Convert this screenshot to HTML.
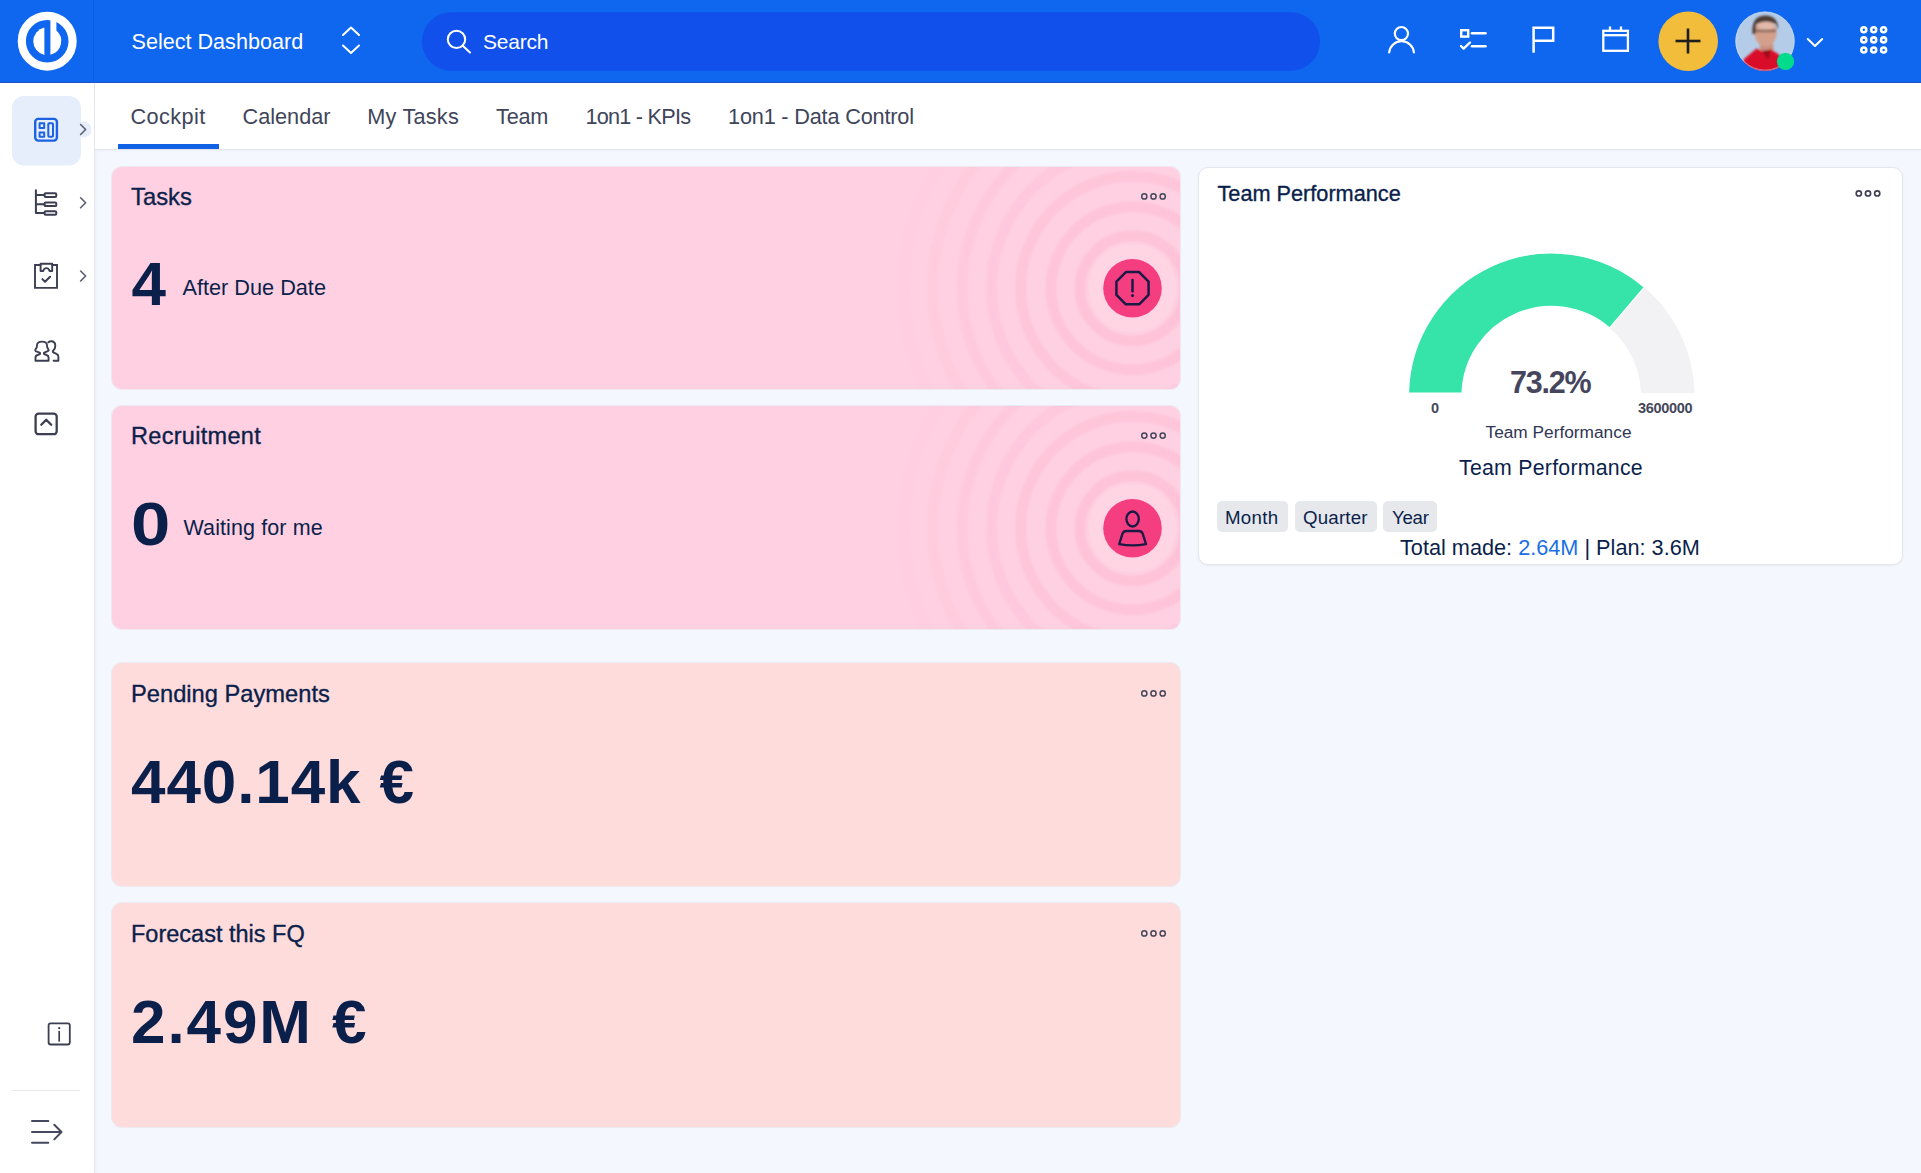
<!DOCTYPE html>
<html><head><meta charset="utf-8">
<style>
*{margin:0;padding:0;box-sizing:border-box}
html,body{width:1921px;height:1173px;overflow:hidden;background:#f4f7fd;font-family:"Liberation Sans",sans-serif}
.abs{position:absolute}
.t{position:absolute;white-space:nowrap;line-height:1}
#hdr{position:absolute;left:0;top:0;width:1921px;height:82px;z-index:2;background:#0f66ef;box-shadow:0 1px 0 #2353c2}
#side{position:absolute;left:0;top:83px;width:95px;height:1090px;background:#fff;border-right:1px solid #e6e8ed;box-shadow:1px 0 3px rgba(30,40,70,.04)}
#tabs{position:absolute;left:95px;top:83px;width:1826px;height:67px;background:#fff;border-bottom:1px solid #e2e5ea;box-shadow:0 1px 2px rgba(0,0,0,.03)}
.card{position:absolute;border-radius:10px;overflow:hidden}
.pink{background:#ffd0e1;box-shadow:0 0 0 1px rgba(190,110,140,.10)}
.salmon{background:#ffdcdc;box-shadow:0 0 0 1px rgba(190,120,120,.10)}
.navy{color:#0b1f4b}
</style></head><body>

<div id="hdr">
  <svg class="abs" style="left:0;top:0" width="1921" height="83">
    <!-- logo -->
    <g transform="translate(47.2,41.2)" fill="#fff">
      <circle r="25.4" fill="none" stroke="#fff" stroke-width="8.2"/>
      <path d="M-2.8,-13.7 A14 14 0 0 0 -2.8,13.7 Z"/>
      <path d="M3.2,-22 L9.2,-22 L9.2,-10.6 A14 14 0 0 1 3.2,13.63 Z"/>
    </g>
    <line x1="93.5" y1="0" x2="93.5" y2="83" stroke="#0d5de4" stroke-width="1"/>
    <!-- up/down chevrons -->
    <path d="M343,35 L351,27.5 L359,35 M343,45.5 L351,53 L359,45.5" fill="none" stroke="#fff" stroke-width="2" stroke-linecap="round" stroke-linejoin="round"/>
    <!-- search pill -->
    <rect x="422" y="12.3" width="898" height="58.5" rx="29.2" fill="#1150ea"/>
    <circle cx="456.5" cy="39.4" r="8.7" fill="none" stroke="#fff" stroke-width="2"/>
    <line x1="463" y1="46" x2="470" y2="52.5" stroke="#fff" stroke-width="2" stroke-linecap="round"/>
    <!-- user -->
    <circle cx="1401.4" cy="33.6" r="6.6" fill="none" stroke="#fff" stroke-width="2.2"/>
    <path d="M1389.2,52.5 A12.4 12.4 0 0 1 1413.9,52.5" fill="none" stroke="#fff" stroke-width="2.2" stroke-linecap="round"/>
    <!-- tasks -->
    <rect x="1461.2" y="30.2" width="7" height="6.4" fill="none" stroke="#fff" stroke-width="2.4"/>
    <line x1="1472" y1="33.3" x2="1485.5" y2="33.3" stroke="#fff" stroke-width="2.6" stroke-linecap="round"/>
    <line x1="1472" y1="46.2" x2="1485.5" y2="46.2" stroke="#fff" stroke-width="2.6" stroke-linecap="round"/>
    <path d="M1461,46 L1463.6,48.6 L1470,42.5" fill="none" stroke="#fff" stroke-width="2.4" stroke-linecap="round" stroke-linejoin="round"/>
    <!-- flag -->
    <path d="M1533.6,52.8 L1533.6,27.8 L1553.2,27.8 L1553.2,40.7 L1533.6,40.7" fill="none" stroke="#fff" stroke-width="2.5"/>
    <!-- calendar -->
    <rect x="1603.3" y="30.8" width="24.6" height="20" fill="none" stroke="#fff" stroke-width="2.3"/>
    <line x1="1603.3" y1="35.2" x2="1627.9" y2="35.2" stroke="#fff" stroke-width="2.3"/>
    <line x1="1610" y1="26.5" x2="1610" y2="30.8" stroke="#fff" stroke-width="2.3"/>
    <line x1="1621" y1="26.5" x2="1621" y2="30.8" stroke="#fff" stroke-width="2.3"/>
    <!-- plus -->
    <circle cx="1688.2" cy="41.2" r="29.8" fill="#f2bd3b"/>
    <line x1="1675.5" y1="41" x2="1700.5" y2="41" stroke="#1f1d1a" stroke-width="2.6"/>
    <line x1="1688" y1="28.5" x2="1688" y2="53.5" stroke="#1f1d1a" stroke-width="2.6"/>
    <!-- avatar -->
    <defs><clipPath id="av"><circle cx="1765" cy="41.3" r="29.6"/></clipPath>
      <filter id="blur" x="-20%" y="-20%" width="140%" height="140%"><feGaussianBlur stdDeviation="0.9"/></filter></defs>
    <g clip-path="url(#av)">
      <rect x="1735" y="11" width="60" height="61" fill="#b4cce8"/>
      <g filter="url(#blur)">
        <path d="M1760,44 L1773,44 L1774,53 L1759,53 Z" fill="#c99280"/>
        <path d="M1740,75 L1744,59 L1756.5,48.5 L1762,51 L1771,49.5 L1779,54.5 L1790,75 Z" fill="#d9102a"/>
        <path d="M1762,51 L1768,60 L1771,49.5 Z" fill="#9a0c1c"/>
        <ellipse cx="1765.6" cy="33" rx="11" ry="13.5" fill="#d49f8a"/>
        <ellipse cx="1766" cy="26" rx="8" ry="5" fill="#e2b9a9"/>
        <path d="M1752.5,34 Q1751,16 1765,15.5 Q1779,16 1778,30 L1776,24 Q1766,19 1756,24 L1755.5,34 Z" fill="#4e3c34"/>
        <rect x="1756" y="29.6" width="20" height="2.6" fill="#7a5a50" opacity=".8"/>
      </g>
    </g>
    <circle cx="1765" cy="41" r="29.2" fill="none" stroke="#cfe0f5" stroke-width="0.8" opacity=".7"/>
    <circle cx="1785.5" cy="61.4" r="8.6" fill="#00dc8c"/>
    <!-- chevron down -->
    <path d="M1807.8,39 L1815,46 L1822.2,39" fill="none" stroke="#fff" stroke-width="2" stroke-linecap="round" stroke-linejoin="round"/>
    <!-- grid -->
    <g fill="none" stroke="#fff" stroke-width="2.6">
      <circle cx="1863.8" cy="29.8" r="2.5"/><circle cx="1873.7" cy="29.8" r="2.5"/><circle cx="1883.6" cy="29.8" r="2.5"/>
      <circle cx="1863.8" cy="39.9" r="2.5"/><circle cx="1873.7" cy="39.9" r="2.5"/><circle cx="1883.6" cy="39.9" r="2.5"/>
      <circle cx="1863.8" cy="50" r="2.5"/><circle cx="1873.7" cy="50" r="2.5"/><circle cx="1883.6" cy="50" r="2.5"/>
    </g>
  </svg>
  <div class="t" style="left:131.5px;top:30.5px;font-size:21.6px;color:#fff">Select Dashboard</div>
  <div class="t" style="left:483px;top:30.5px;font-size:21px;color:#fff;letter-spacing:-0.2px">Search</div>
</div>

<div id="side"></div>
<svg class="abs" style="left:0;top:0" width="95" height="1173">
  <rect x="12" y="96" width="69" height="69.5" rx="12" fill="#e7eefb"/>
  <circle cx="83.5" cy="129.5" r="8" fill="#e7eefb"/>
  <g fill="none" stroke="#1d62e2" stroke-width="2.4" stroke-linejoin="round">
    <rect x="35.2" y="118.9" width="21.7" height="21.7" rx="3"/>
    <rect x="39.6" y="123.3" width="4.6" height="4.6" stroke-width="2"/>
    <rect x="39.6" y="132.6" width="4.6" height="4.1" stroke-width="2"/>
    <rect x="48.3" y="123.3" width="4.7" height="13.4" rx="1" stroke-width="2"/>
  </g>
  <g fill="none" stroke="#5b5e70" stroke-width="1.6" stroke-linecap="round" stroke-linejoin="round">
    <path d="M80.6,124.5 L85.6,129.5 L80.6,134.5"/>
    <path d="M80.6,197.8 L85.6,202.8 L80.6,207.8"/>
    <path d="M80.6,271 L85.6,276 L80.6,281"/>
  </g>
  <g fill="none" stroke="#3c3e52" stroke-width="2" stroke-linejoin="round" stroke-linecap="round">
    <path d="M35.9,190.2 V213 H44.5 M35.9,195.1 H44.5 M35.9,204.3 H44.5"/>
    <rect x="44.5" y="193.3" width="11.8" height="3.6" rx="1.2"/>
    <rect x="44.5" y="202.5" width="11.8" height="3.6" rx="1.2"/>
    <rect x="44.5" y="211.2" width="11.8" height="3.6" rx="1.2"/>
    <path d="M40.6,265 H35 V287.9 H57 V265 H52.2" stroke-width="1.9" stroke-linejoin="miter"/>
    <path d="M40.6,271 V263.8 H52.2 V271 H49.6 Q48.8,268.1 46.4,268.1 Q44,268.1 43.2,271 Z" stroke-width="1.9"/>
    <path d="M42.4,279.1 L45,281.8 L50.1,276.7" stroke-width="2"/>
    <path d="M35.5,360.8 L35.5,357.6 Q35.5,355.6 37.6,355 L39.8,354.2 Q40.6,353.2 39.6,352.6 L36.2,351.4 Q34.7,350.6 35.6,349.2 Q37,347.4 37,345.4 Q37,341.6 42,341.6 Q47,341.6 47,345.4 Q47,347.4 48.3,349.2 Q49.2,350.6 47.7,351.2 L44.4,352.6 Q43.4,353.2 44.2,354.2 L46.5,355 Q48.6,355.6 48.6,357.6 L48.6,360.8 Z" stroke-width="1.9"/>
    <path d="M48.3,342.3 Q49.5,341.2 51.2,341.2 Q55.3,341.2 55.3,345.8 Q55.3,348.8 53.3,350.5 Q52.1,351.8 53.8,352.6 L56.5,353.8 Q58.4,354.7 58.4,357 L58.4,360.8 L53.6,360.8" stroke-width="1.9"/>
    <rect x="35.6" y="413.6" width="21.1" height="20.6" rx="3" stroke-width="2.3"/>
    <path d="M41.3,424.8 L46.2,419.8 L51.2,424.8" stroke-width="2.3"/>
    <rect x="48.6" y="1023.3" width="21.2" height="21.2" rx="2" stroke-width="1.8"/>
    <path d="M59.2,1031.5 V1041" stroke-width="1.7"/>
  </g>
  <circle cx="59.2" cy="1028.2" r="1.1" fill="#3c3e52"/>
  <line x1="12" y1="1090.5" x2="80" y2="1090.5" stroke="#e6e7ec" stroke-width="1"/>
  <g fill="none" stroke="#45485f" stroke-width="2" stroke-linecap="round" stroke-linejoin="round">
    <path d="M32,1121 H48.3 M32,1132 H61 M32,1142.8 H48.3 M54.3,1124.8 L61.5,1132 L54.3,1139.4"/>
  </g>
</svg>

<div id="tabs"></div>
<div class="abs" style="left:118px;top:144px;width:101px;height:5px;background:#1262e6"></div>
<div class="t" style="left:130.5px;top:105.9px;font-size:21.7px;color:#40455a;letter-spacing:0.42px">Cockpit</div>
<div class="t" style="left:242.5px;top:105.9px;font-size:21.7px;color:#40455a">Calendar</div>
<div class="t" style="left:367.2px;top:105.9px;font-size:21.7px;color:#40455a;letter-spacing:0.23px">My Tasks</div>
<div class="t" style="left:496px;top:105.9px;font-size:21.7px;color:#40455a;letter-spacing:-0.2px">Team</div>
<div class="t" style="left:585.5px;top:105.9px;font-size:21.7px;color:#40455a;letter-spacing:-0.78px">1on1 - KPIs</div>
<div class="t" style="left:728px;top:105.9px;font-size:21.7px;color:#40455a;letter-spacing:-0.18px">1on1 - Data Control</div>


<div class="card pink" style="left:112px;top:167px;width:1068px;height:222px">
  <svg class="abs" style="left:0;top:0" width="1068" height="222">
    <defs><filter id="sf" x="-10%" y="-10%" width="120%" height="120%"><feGaussianBlur stdDeviation="0.9"/></filter></defs>
    <g filter="url(#sf)"><circle cx="1020.5" cy="121.2" r="52.5" fill="none" stroke="#ffbcd3" stroke-width="11" opacity="0.62"/><circle cx="1020.5" cy="121.2" r="81.5" fill="none" stroke="#ffbcd3" stroke-width="11" opacity="0.56"/><circle cx="1020.5" cy="121.2" r="112" fill="none" stroke="#ffbcd3" stroke-width="11" opacity="0.5"/><circle cx="1020.5" cy="121.2" r="141" fill="none" stroke="#ffbcd3" stroke-width="11" opacity="0.42"/><circle cx="1020.5" cy="121.2" r="170.5" fill="none" stroke="#ffbcd3" stroke-width="11" opacity="0.33"/><circle cx="1020.5" cy="121.2" r="200" fill="none" stroke="#ffbcd3" stroke-width="11" opacity="0.22"/><circle cx="1020.5" cy="121.2" r="229" fill="none" stroke="#ffbcd3" stroke-width="11" opacity="0.1"/></g>
    <circle cx="1020.5" cy="121.2" r="44" fill="#fff" opacity=".12"/>
    <circle cx="1020.5" cy="121.2" r="29.3" fill="#f53e7f"/>
    <polygon points="1036.58,127.86 1027.16,137.28 1013.84,137.28 1004.42,127.86 1004.42,114.54 1013.84,105.12 1027.16,105.12 1036.58,114.54" fill="none" stroke="#191a45" stroke-width="2.5" stroke-linejoin="round"/>
    <line x1="1020.5" y1="113" x2="1020.5" y2="124.2" stroke="#191a45" stroke-width="2.5" stroke-linecap="round"/>
    <circle cx="1020.5" cy="128.5" r="1.5" fill="#191a45"/>
    <g fill="none" stroke="#44465a" stroke-width="1.5"><circle cx="1032.3" cy="29.4" r="2.6"/><circle cx="1041.5" cy="29.4" r="2.6"/><circle cx="1050.7" cy="29.4" r="2.6"/></g>
  </svg>
</div>
<div class="card pink" style="left:112px;top:406px;width:1068px;height:222.5px">
  <svg class="abs" style="left:0;top:0" width="1068" height="223">
    <g filter="url(#sf)"><circle cx="1020.5" cy="122.2" r="52.5" fill="none" stroke="#ffbcd3" stroke-width="11" opacity="0.62"/><circle cx="1020.5" cy="122.2" r="81.5" fill="none" stroke="#ffbcd3" stroke-width="11" opacity="0.56"/><circle cx="1020.5" cy="122.2" r="112" fill="none" stroke="#ffbcd3" stroke-width="11" opacity="0.5"/><circle cx="1020.5" cy="122.2" r="141" fill="none" stroke="#ffbcd3" stroke-width="11" opacity="0.42"/><circle cx="1020.5" cy="122.2" r="170.5" fill="none" stroke="#ffbcd3" stroke-width="11" opacity="0.33"/><circle cx="1020.5" cy="122.2" r="200" fill="none" stroke="#ffbcd3" stroke-width="11" opacity="0.22"/><circle cx="1020.5" cy="122.2" r="229" fill="none" stroke="#ffbcd3" stroke-width="11" opacity="0.1"/></g>
    <circle cx="1020.5" cy="122.2" r="44" fill="#fff" opacity=".12"/>
    <circle cx="1020.5" cy="122.2" r="29.3" fill="#f53e7f"/>
    <ellipse cx="1020.6" cy="113" rx="6.2" ry="7.5" fill="none" stroke="#191a45" stroke-width="2.3"/>
    <path d="M1007.2,138.2 L1010.5,127.6 Q1011.5,125 1014.5,125 L1026.7,125 Q1029.7,125 1030.7,127.6 L1034,138.2 Q1020.6,140.6 1007.2,138.2 Z" fill="none" stroke="#191a45" stroke-width="2.3" stroke-linejoin="round"/>
    <g fill="none" stroke="#44465a" stroke-width="1.5"><circle cx="1032.3" cy="29.6" r="2.6"/><circle cx="1041.5" cy="29.6" r="2.6"/><circle cx="1050.7" cy="29.6" r="2.6"/></g>
  </svg>
</div>
<div class="card salmon" style="left:112px;top:663px;width:1068px;height:223px">
  <svg class="abs" style="left:0;top:0" width="1068" height="223"><g fill="none" stroke="#44465a" stroke-width="1.5"><circle cx="1032.3" cy="30.4" r="2.6"/><circle cx="1041.5" cy="30.4" r="2.6"/><circle cx="1050.7" cy="30.4" r="2.6"/></g></svg>
</div>
<div class="card salmon" style="left:112px;top:903px;width:1068px;height:224px">
  <svg class="abs" style="left:0;top:0" width="1068" height="224"><g fill="none" stroke="#44465a" stroke-width="1.5"><circle cx="1032.3" cy="30.4" r="2.6"/><circle cx="1041.5" cy="30.4" r="2.6"/><circle cx="1050.7" cy="30.4" r="2.6"/></g></svg>
</div>

<div class="t navy" style="-webkit-text-stroke:0.35px #0b1f4b;left:131px;top:185.3px;font-size:23.8px">Tasks</div>
<div class="t navy" style="-webkit-text-stroke:0.35px #0b1f4b;left:131px;top:424.9px;font-size:23.5px;letter-spacing:0.3px">Recruitment</div>
<div class="t navy" style="-webkit-text-stroke:0.35px #0b1f4b;left:131px;top:682.9px;font-size:23.7px">Pending Payments</div>
<div class="t navy" style="-webkit-text-stroke:0.35px #0b1f4b;left:131px;top:922.9px;font-size:23.5px">Forecast this FQ</div>
<div class="t navy" style="left:131.5px;top:253.2px;font-size:62px;font-weight:bold">4</div>
<div class="t navy" style="left:182.5px;top:277.2px;font-size:21.7px">After Due Date</div>
<div class="t navy" style="left:131px;top:492.5px;font-size:62px;font-weight:bold;transform:scaleX(1.14);transform-origin:0 0">0</div>
<div class="t navy" style="left:183.5px;top:517.7px;font-size:21.5px;letter-spacing:0.1px">Waiting for me</div>
<div class="t navy" style="left:131px;top:750.8px;font-size:62px;font-weight:bold;letter-spacing:0.9px">440.14k €</div>
<div class="t navy" style="left:131px;top:990.8px;font-size:62px;font-weight:bold;letter-spacing:1.9px">2.49M €</div>

<div class="abs" style="left:1198px;top:166.5px;width:705px;height:398px;background:#fff;border:1px solid #e3e6ea;border-radius:10px;box-shadow:0 1px 3px rgba(20,30,60,.05)"></div>
<svg class="abs" style="left:0;top:0" width="1921" height="600">
  <g fill="none" stroke="#3f4254" stroke-width="1.7"><circle cx="1858.8" cy="193.4" r="2.6"/><circle cx="1868" cy="193.4" r="2.6"/><circle cx="1877.2" cy="193.4" r="2.6"/></g>
  <path d="M1408.53,393 A143 143 0 0 1 1694.47,393 L1640.95,393 A89.5 89.5 0 0 0 1462.05,393 Z" fill="#f2f2f4"/>
  <path d="M1408.53,393 A143 143 0 0 1 1644.37,287.26 L1609.63,327.94 A89.5 89.5 0 0 0 1462.05,393 Z" fill="#36e3a9" stroke="#fff" stroke-width="1.2" stroke-linejoin="miter"/>
</svg>
<div class="t navy" style="-webkit-text-stroke:0.35px #0b1f4b;left:1217.5px;top:183.4px;font-size:21.7px">Team Performance</div>
<div class="t" style="left:1510px;top:367px;font-size:30.5px;font-weight:bold;color:#45465e;letter-spacing:-1.2px">73.2%</div>
<div class="t" style="left:1431px;top:400.5px;font-size:14.5px;font-weight:bold;color:#45475a">0</div>
<div class="t" style="left:1638px;top:400.5px;font-size:14.5px;font-weight:bold;color:#45475a;letter-spacing:-0.3px">3600000</div>
<div class="t" style="left:1485.5px;top:423.8px;font-size:17.3px;color:#2f3654">Team Performance</div>
<div class="t navy" style="left:1459px;top:457.7px;font-size:21.3px;letter-spacing:0.25px">Team Performance</div>
<div class="abs" style="left:1217px;top:501.3px;width:71px;height:31px;background:#e6e8eb;border-radius:5px"></div>
<div class="abs" style="left:1294.7px;top:501.3px;width:82px;height:31px;background:#e6e8eb;border-radius:5px"></div>
<div class="abs" style="left:1383.3px;top:501.3px;width:53.6px;height:31px;background:#e6e8eb;border-radius:5px"></div>
<div class="t navy" style="left:1225px;top:509.2px;font-size:18.7px;letter-spacing:0.3px">Month</div>
<div class="t navy" style="left:1303px;top:509.2px;font-size:18.7px;letter-spacing:0.2px">Quarter</div>
<div class="t navy" style="left:1392px;top:509.2px;font-size:18.7px;letter-spacing:-0.3px">Year</div>
<div class="t navy" style="left:1400px;top:537px;font-size:21.7px">Total made: <span style="color:#1a6fe6">2.64M</span> | Plan: 3.6M</div>
</body></html>
